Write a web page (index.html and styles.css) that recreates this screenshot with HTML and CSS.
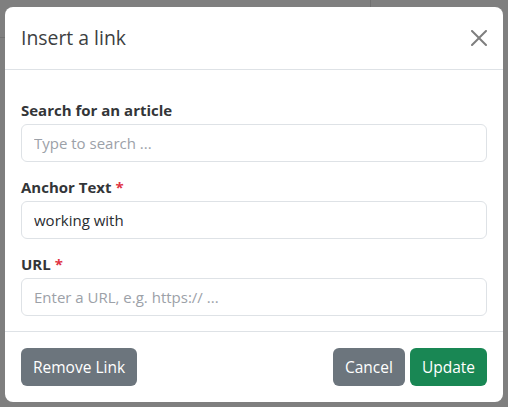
FILE: index.html
```html
<!DOCTYPE html>
<html lang="en">
<head>
<meta charset="utf-8">
<title>Insert a link</title>
<link rel="stylesheet" href="styles.css">
</head>
<body>
<div class="page">
  <div class="page-rule-v"></div>
  <div class="page-rule-h"></div>
</div>
<div class="backdrop">
  <div class="modal" role="dialog" aria-labelledby="modal-title">
    <header class="modal-header">
      <h5 class="modal-title" id="modal-title">Insert a link</h5>
      <button class="btn-close" type="button" aria-label="Close">
        <svg viewBox="0 0 16 16" width="16" height="16" aria-hidden="true"><path d="M.293.293a1 1 0 0 1 1.414 0L8 6.586 14.293.293a1 1 0 1 1 1.414 1.414L9.414 8l6.293 6.293a1 1 0 0 1-1.414 1.414L8 9.414l-6.293 6.293a1 1 0 0 1-1.414-1.414L6.586 8 .293 1.707a1 1 0 0 1 0-1.414z"/></svg>
      </button>
    </header>
    <div class="modal-body">
      <div class="field">
        <label class="form-label" for="search">Search for an article</label>
        <input class="form-control" id="search" type="text" placeholder="Type to search ...">
      </div>
      <div class="field">
        <label class="form-label" for="anchor">Anchor Text <span class="req">*</span></label>
        <input class="form-control" id="anchor" type="text" value="working with">
      </div>
      <div class="field">
        <label class="form-label" for="url">URL <span class="req">*</span></label>
        <input class="form-control" id="url" type="text" placeholder="Enter a URL, e.g. https:// ...">
      </div>
    </div>
    <footer class="modal-footer">
      <button class="btn btn-secondary" type="button">Remove Link</button>
      <div class="footer-right">
        <button class="btn btn-secondary" type="button">Cancel</button>
        <button class="btn btn-success" type="button">Update</button>
      </div>
    </footer>
  </div>
</div>
</body>
</html>
```
FILE: styles.css
```css
* { box-sizing: border-box; }

html, body {
  margin: 0;
  height: 100%;
}

body {
  font-family: "Open Sans", "Noto Sans", "Liberation Sans", sans-serif;
  color: #212529;
  background: #ffffff;
  overflow: hidden;
  position: relative;
}

.page {
  height: 100%;
  position: relative;
}

.page-rule-v {
  position: absolute;
  left: 370px;
  top: 0;
  width: 1px;
  height: 40px;
  background: #e2e2e2;
}

.page-rule-h {
  position: absolute;
  left: 0;
  top: 37px;
  width: 12px;
  height: 1px;
  background: #e2e2e2;
}

.backdrop {
  position: absolute;
  inset: 0;
  background: rgba(0, 0, 0, 0.5);
  display: flex;
  justify-content: center;
  align-items: flex-start;
  padding-top: 7px;
}

.modal {
  width: 498px;
  background: #ffffff;
  border-radius: 8px;
  overflow: hidden;
}

.modal-header {
  display: flex;
  align-items: center;
  justify-content: space-between;
  padding: 16px 16px;
  border-bottom: 1px solid #dee2e6;
}

.modal-title {
  margin: 0;
  font-size: 19.4px;
  font-weight: 400;
  line-height: 30px;
  color: #3d3f42;
}

.btn-close {
  display: flex;
  padding: 0;
  border: 0;
  background: transparent;
  opacity: 0.5;
  width: 16px;
  height: 16px;
}

.btn-close svg {
  fill: #000000;
}

.modal-body {
  padding: 30px 16px 15px;
  display: flex;
  flex-direction: column;
  gap: 15px;
}

.field {
  display: flex;
  flex-direction: column;
}

.form-label {
  font-size: 15px;
  font-weight: 700;
  line-height: 21px;
  margin-bottom: 3px;
  color: #333538;
}

.req {
  color: #e03444;
}

.form-control {
  height: 38px;
  width: 100%;
  padding: 0 12px;
  font-family: inherit;
  font-size: 15px;
  color: #2a2d31;
  background: #ffffff;
  border: 1px solid #dee2e6;
  border-radius: 6px;
  outline: none;
}

.form-control::placeholder {
  color: #9ca1a8;
}

.modal-footer {
  display: flex;
  justify-content: space-between;
  align-items: center;
  padding: 16px 16px;
  border-top: 1px solid #dee2e6;
}

.footer-right {
  display: flex;
  gap: 5px;
}

.btn {
  height: 38px;
  padding: 0 12px;
  font-family: inherit;
  font-size: 15.5px;
  color: #ffffff;
  border: 0;
  border-radius: 6px;
}

.btn-secondary {
  background: #6c757d;
}

.btn-success {
  background: #198754;
}
```
